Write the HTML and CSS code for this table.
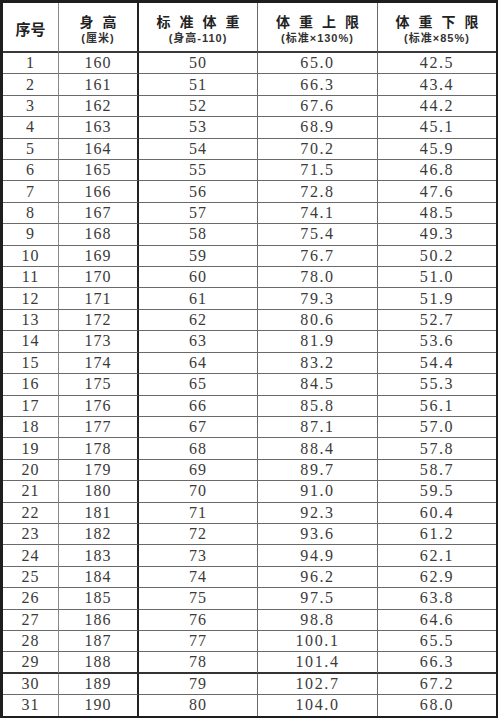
FILE: index.html
```html
<!DOCTYPE html>
<html lang="zh">
<head>
<meta charset="utf-8">
<link rel="stylesheet" href="styles.css">
</head>
<body>
<table class="tbl">
<colgroup>
<col class="c1"><col class="c2"><col class="c3"><col class="c4"><col class="c5">
</colgroup>
<thead>
<tr class="head">
<th class="solo"><span class="t1 sp0">序号</span></th>
<th><span class="t1">身高</span><span class="t2">(厘米)</span></th>
<th><span class="t1">标准体重</span><span class="t2">(身高-110)</span></th>
<th><span class="t1">体重上限</span><span class="t2">(标准×130%)</span></th>
<th><span class="t1">体重下限</span><span class="t2">(标准×85%)</span></th>
</tr>
</thead>
<tbody>
<tr><td>1</td><td>160</td><td>50</td><td>65.0</td><td>42.5</td></tr>
<tr><td>2</td><td>161</td><td>51</td><td>66.3</td><td>43.4</td></tr>
<tr><td>3</td><td>162</td><td>52</td><td>67.6</td><td>44.2</td></tr>
<tr><td>4</td><td>163</td><td>53</td><td>68.9</td><td>45.1</td></tr>
<tr><td>5</td><td>164</td><td>54</td><td>70.2</td><td>45.9</td></tr>
<tr><td>6</td><td>165</td><td>55</td><td>71.5</td><td>46.8</td></tr>
<tr><td>7</td><td>166</td><td>56</td><td>72.8</td><td>47.6</td></tr>
<tr><td>8</td><td>167</td><td>57</td><td>74.1</td><td>48.5</td></tr>
<tr><td>9</td><td>168</td><td>58</td><td>75.4</td><td>49.3</td></tr>
<tr><td>10</td><td>169</td><td>59</td><td>76.7</td><td>50.2</td></tr>
<tr><td>11</td><td>170</td><td>60</td><td>78.0</td><td>51.0</td></tr>
<tr><td>12</td><td>171</td><td>61</td><td>79.3</td><td>51.9</td></tr>
<tr><td>13</td><td>172</td><td>62</td><td>80.6</td><td>52.7</td></tr>
<tr><td>14</td><td>173</td><td>63</td><td>81.9</td><td>53.6</td></tr>
<tr><td>15</td><td>174</td><td>64</td><td>83.2</td><td>54.4</td></tr>
<tr><td>16</td><td>175</td><td>65</td><td>84.5</td><td>55.3</td></tr>
<tr><td>17</td><td>176</td><td>66</td><td>85.8</td><td>56.1</td></tr>
<tr><td>18</td><td>177</td><td>67</td><td>87.1</td><td>57.0</td></tr>
<tr><td>19</td><td>178</td><td>68</td><td>88.4</td><td>57.8</td></tr>
<tr><td>20</td><td>179</td><td>69</td><td>89.7</td><td>58.7</td></tr>
<tr><td>21</td><td>180</td><td>70</td><td>91.0</td><td>59.5</td></tr>
<tr><td>22</td><td>181</td><td>71</td><td>92.3</td><td>60.4</td></tr>
<tr><td>23</td><td>182</td><td>72</td><td>93.6</td><td>61.2</td></tr>
<tr><td>24</td><td>183</td><td>73</td><td>94.9</td><td>62.1</td></tr>
<tr><td>25</td><td>184</td><td>74</td><td>96.2</td><td>62.9</td></tr>
<tr><td>26</td><td>185</td><td>75</td><td>97.5</td><td>63.8</td></tr>
<tr><td>27</td><td>186</td><td>76</td><td>98.8</td><td>64.6</td></tr>
<tr><td>28</td><td>187</td><td>77</td><td>100.1</td><td>65.5</td></tr>
<tr class="dark"><td>29</td><td>188</td><td>78</td><td>101.4</td><td>66.3</td></tr>
<tr><td>30</td><td>189</td><td>79</td><td>102.7</td><td>67.2</td></tr>
<tr><td>31</td><td>190</td><td>80</td><td>104.0</td><td>68.0</td></tr>
</tbody>
</table>
</body>
</html>
```

FILE: styles.css
```css
html, body {
  margin: 0;
  padding: 0;
  background: #ffffff;
}

.tbl {
  border-collapse: separate;
  border-spacing: 0;
  table-layout: fixed;
  width: 498px;
  border-left: 3px solid #1e1e1e;
  border-top: 3px solid #1e1e1e;
  border-right: 2px solid #1e1e1e;
  border-bottom: 2px solid #1e1e1e;
  font-family: "Liberation Serif", "Noto Sans CJK SC", serif;
  color: #3a3a3a;
}

.c1 { width: 56px; }
.c2 { width: 80px; }
.c3 { width: 119px; }
.c4 { width: 120px; }
.c5 { width: 118px; }

.tbl th,
.tbl td {
  padding: 0;
  text-align: center;
  vertical-align: middle;
  border-right: 1px solid #6a6a6a;
  border-bottom: 1px solid #6a6a6a;
}

.tbl th:nth-child(1),
.tbl td:nth-child(1) {
  border-right: 1px solid #8a8a8a;
}

.tbl th:nth-child(2),
.tbl td:nth-child(2) {
  border-right: 2px solid #222222;
}

.tbl th:nth-child(5),
.tbl td:nth-child(5) {
  border-right: none;
}

.head th {
  height: 50px;
  box-sizing: border-box;
  vertical-align: top;
  padding-top: 11px;
  border-bottom: 2px solid #3a3a3a;
  font-family: "Liberation Sans", "Noto Sans CJK SC", sans-serif;
  font-weight: 700;
  color: #222222;
}

.head th.solo {
  vertical-align: middle;
  padding-top: 4px;
}

.t1 {
  display: block;
  font-size: 14px;
  line-height: 17px;
  letter-spacing: 9px;
  padding-left: 9px;
}

.t1.sp0 {
  letter-spacing: 0;
  padding-left: 0;
  font-size: 15px;
}

.t2 {
  display: block;
  margin-top: 1px;
  font-size: 11px;
  line-height: 12px;
  letter-spacing: 1px;
  font-weight: 700;
  color: #333333;
}

.tbl td {
  height: 20.42px;
  font-size: 16px;
  line-height: 16px;
  letter-spacing: 1px;
}

.tbl td:nth-child(4),
.tbl td:nth-child(5) {
  letter-spacing: 1.6px;
}

.tbl tbody tr:last-child td {
  border-bottom: none;
}

.tbl tr.dark td {
  border-bottom: 2px solid #333333;
  height: 19.42px;
}
```
